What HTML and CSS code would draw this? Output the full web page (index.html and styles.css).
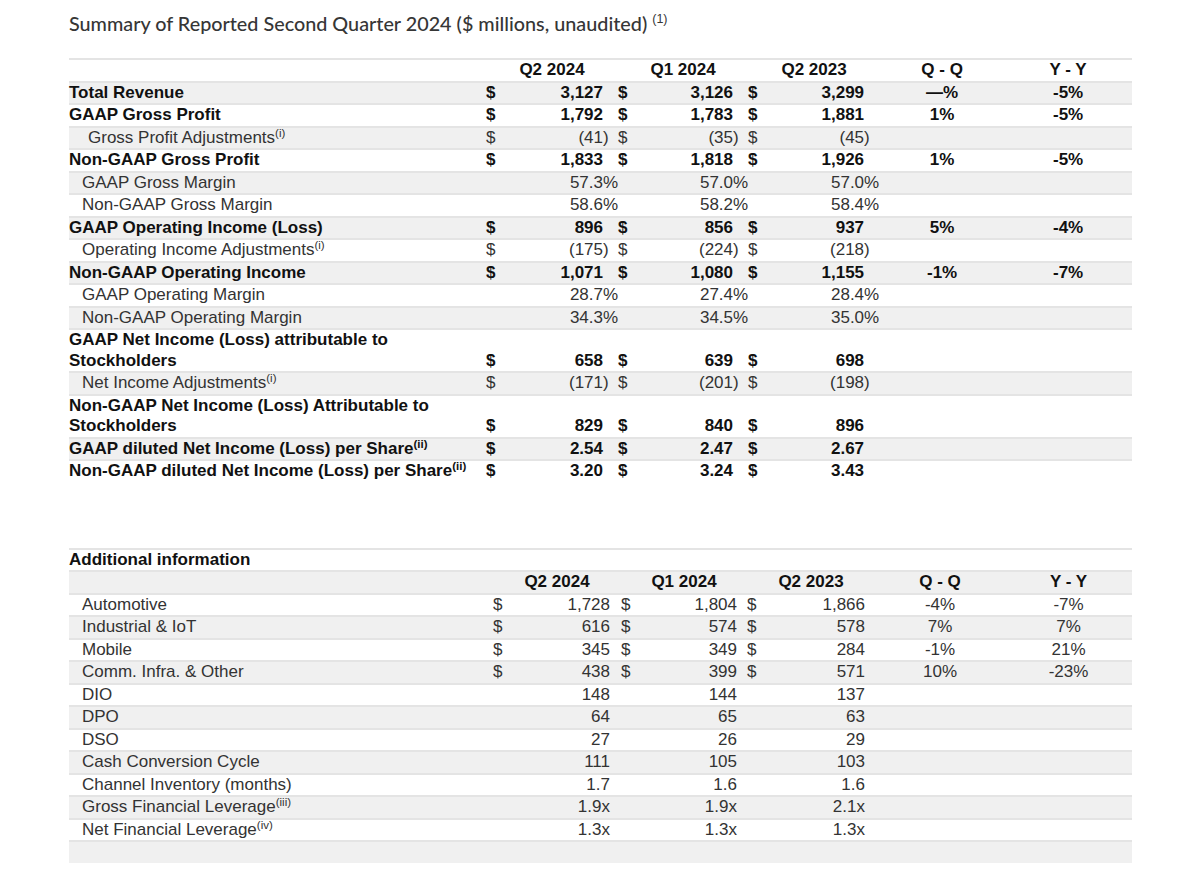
FILE: index.html
```html
<!DOCTYPE html>
<html lang="en">
<head>
<meta charset="utf-8">
<title>Summary of Reported Second Quarter 2024</title>
<link rel="stylesheet" href="styles.css">
</head>
<body>
<div class="page">
  <h1 class="title">Summary of Reported Second Quarter 2024 ($ millions, unaudited) <sup>(1)</sup></h1>

  <table class="fin top">
    <colgroup>
      <col class="w-label-t"><col class="w-d"><col class="w-n1t"><col class="w-s1t">
      <col class="w-d"><col class="w-n2t"><col class="w-s2t">
      <col class="w-d"><col class="w-n3t"><col class="w-s3t">
      <col class="w-qqt"><col class="w-yyt">
    </colgroup>
    <thead>
      <tr class="hdr">
        <th></th>
        <th colspan="3">Q2 2024</th>
        <th colspan="3">Q1 2024</th>
        <th colspan="3">Q2 2023</th>
        <th>Q - Q</th>
        <th>Y - Y</th>
      </tr>
    </thead>
    <tbody>
      <tr class="b alt">
        <td class="l">Total Revenue</td>
        <td class="d">$</td><td class="n">3,127</td><td class="s"></td>
        <td class="d">$</td><td class="n">3,126</td><td class="s"></td>
        <td class="d">$</td><td class="n">3,299</td><td class="s"></td>
        <td class="c">—%</td><td class="c">-5%</td>
      </tr>
      <tr class="b">
        <td class="l">GAAP Gross Profit</td>
        <td class="d">$</td><td class="n">1,792</td><td class="s"></td>
        <td class="d">$</td><td class="n">1,783</td><td class="s"></td>
        <td class="d">$</td><td class="n">1,881</td><td class="s"></td>
        <td class="c">1%</td><td class="c">-5%</td>
      </tr>
      <tr class="alt">
        <td class="l i2">Gross Profit Adjustments<sup>(i)</sup></td>
        <td class="d">$</td><td class="n">(41</td><td class="s">)</td>
        <td class="d">$</td><td class="n">(35</td><td class="s">)</td>
        <td class="d">$</td><td class="n">(45</td><td class="s">)</td>
        <td class="c"></td><td class="c"></td>
      </tr>
      <tr class="b">
        <td class="l">Non-GAAP Gross Profit</td>
        <td class="d">$</td><td class="n">1,833</td><td class="s"></td>
        <td class="d">$</td><td class="n">1,818</td><td class="s"></td>
        <td class="d">$</td><td class="n">1,926</td><td class="s"></td>
        <td class="c">1%</td><td class="c">-5%</td>
      </tr>
      <tr class="alt">
        <td class="l i1">GAAP Gross Margin</td>
        <td class="d"></td><td class="n">57.3</td><td class="s">%</td>
        <td class="d"></td><td class="n">57.0</td><td class="s">%</td>
        <td class="d"></td><td class="n">57.0</td><td class="s">%</td>
        <td class="c"></td><td class="c"></td>
      </tr>
      <tr>
        <td class="l i1">Non-GAAP Gross Margin</td>
        <td class="d"></td><td class="n">58.6</td><td class="s">%</td>
        <td class="d"></td><td class="n">58.2</td><td class="s">%</td>
        <td class="d"></td><td class="n">58.4</td><td class="s">%</td>
        <td class="c"></td><td class="c"></td>
      </tr>
      <tr class="b alt">
        <td class="l">GAAP Operating Income (Loss)</td>
        <td class="d">$</td><td class="n">896</td><td class="s"></td>
        <td class="d">$</td><td class="n">856</td><td class="s"></td>
        <td class="d">$</td><td class="n">937</td><td class="s"></td>
        <td class="c">5%</td><td class="c">-4%</td>
      </tr>
      <tr>
        <td class="l i1">Operating Income Adjustments<sup>(i)</sup></td>
        <td class="d">$</td><td class="n">(175</td><td class="s">)</td>
        <td class="d">$</td><td class="n">(224</td><td class="s">)</td>
        <td class="d">$</td><td class="n">(218</td><td class="s">)</td>
        <td class="c"></td><td class="c"></td>
      </tr>
      <tr class="b alt">
        <td class="l">Non-GAAP Operating Income</td>
        <td class="d">$</td><td class="n">1,071</td><td class="s"></td>
        <td class="d">$</td><td class="n">1,080</td><td class="s"></td>
        <td class="d">$</td><td class="n">1,155</td><td class="s"></td>
        <td class="c">-1%</td><td class="c">-7%</td>
      </tr>
      <tr>
        <td class="l i1">GAAP Operating Margin</td>
        <td class="d"></td><td class="n">28.7</td><td class="s">%</td>
        <td class="d"></td><td class="n">27.4</td><td class="s">%</td>
        <td class="d"></td><td class="n">28.4</td><td class="s">%</td>
        <td class="c"></td><td class="c"></td>
      </tr>
      <tr class="alt">
        <td class="l i1">Non-GAAP Operating Margin</td>
        <td class="d"></td><td class="n">34.3</td><td class="s">%</td>
        <td class="d"></td><td class="n">34.5</td><td class="s">%</td>
        <td class="d"></td><td class="n">35.0</td><td class="s">%</td>
        <td class="c"></td><td class="c"></td>
      </tr>
      <tr class="b">
        <td class="l">GAAP Net Income (Loss) attributable to<br>Stockholders</td>
        <td class="d">$</td><td class="n">658</td><td class="s"></td>
        <td class="d">$</td><td class="n">639</td><td class="s"></td>
        <td class="d">$</td><td class="n">698</td><td class="s"></td>
        <td class="c"></td><td class="c"></td>
      </tr>
      <tr class="alt">
        <td class="l i1">Net Income Adjustments<sup>(i)</sup></td>
        <td class="d">$</td><td class="n">(171</td><td class="s">)</td>
        <td class="d">$</td><td class="n">(201</td><td class="s">)</td>
        <td class="d">$</td><td class="n">(198</td><td class="s">)</td>
        <td class="c"></td><td class="c"></td>
      </tr>
      <tr class="b">
        <td class="l">Non-GAAP Net Income (Loss) Attributable to<br>Stockholders</td>
        <td class="d">$</td><td class="n">829</td><td class="s"></td>
        <td class="d">$</td><td class="n">840</td><td class="s"></td>
        <td class="d">$</td><td class="n">896</td><td class="s"></td>
        <td class="c"></td><td class="c"></td>
      </tr>
      <tr class="b alt">
        <td class="l">GAAP diluted Net Income (Loss) per Share<sup>(ii)</sup></td>
        <td class="d">$</td><td class="n">2.54</td><td class="s"></td>
        <td class="d">$</td><td class="n">2.47</td><td class="s"></td>
        <td class="d">$</td><td class="n">2.67</td><td class="s"></td>
        <td class="c"></td><td class="c"></td>
      </tr>
      <tr class="b">
        <td class="l">Non-GAAP diluted Net Income (Loss) per Share<sup>(ii)</sup></td>
        <td class="d">$</td><td class="n">3.20</td><td class="s"></td>
        <td class="d">$</td><td class="n">3.24</td><td class="s"></td>
        <td class="d">$</td><td class="n">3.43</td><td class="s"></td>
        <td class="c"></td><td class="c"></td>
      </tr>
    </tbody>
  </table>

  <table class="fin bottom">
    <colgroup>
      <col class="w-label-b"><col class="w-d"><col class="w-n1b"><col class="w-s1b">
      <col class="w-d"><col class="w-n2b"><col class="w-s2b">
      <col class="w-d"><col class="w-n3b"><col class="w-s3b">
      <col class="w-qqb"><col class="w-yyb">
    </colgroup>
    <thead>
      <tr class="b">
        <td class="l" colspan="12">Additional information</td>
      </tr>
      <tr class="hdr alt">
        <th></th>
        <th colspan="3">Q2 2024</th>
        <th colspan="3">Q1 2024</th>
        <th colspan="3">Q2 2023</th>
        <th>Q - Q</th>
        <th>Y - Y</th>
      </tr>
    </thead>
    <tbody>
      <tr>
        <td class="l i1">Automotive</td>
        <td class="d">$</td><td class="n">1,728</td><td class="s"></td>
        <td class="d">$</td><td class="n">1,804</td><td class="s"></td>
        <td class="d">$</td><td class="n">1,866</td><td class="s"></td>
        <td class="c">-4%</td><td class="c">-7%</td>
      </tr>
      <tr class="alt">
        <td class="l i1">Industrial &amp; IoT</td>
        <td class="d">$</td><td class="n">616</td><td class="s"></td>
        <td class="d">$</td><td class="n">574</td><td class="s"></td>
        <td class="d">$</td><td class="n">578</td><td class="s"></td>
        <td class="c">7%</td><td class="c">7%</td>
      </tr>
      <tr>
        <td class="l i1">Mobile</td>
        <td class="d">$</td><td class="n">345</td><td class="s"></td>
        <td class="d">$</td><td class="n">349</td><td class="s"></td>
        <td class="d">$</td><td class="n">284</td><td class="s"></td>
        <td class="c">-1%</td><td class="c">21%</td>
      </tr>
      <tr class="alt">
        <td class="l i1">Comm. Infra. &amp; Other</td>
        <td class="d">$</td><td class="n">438</td><td class="s"></td>
        <td class="d">$</td><td class="n">399</td><td class="s"></td>
        <td class="d">$</td><td class="n">571</td><td class="s"></td>
        <td class="c">10%</td><td class="c">-23%</td>
      </tr>
      <tr>
        <td class="l i1">DIO</td>
        <td class="d"></td><td class="n">148</td><td class="s"></td>
        <td class="d"></td><td class="n">144</td><td class="s"></td>
        <td class="d"></td><td class="n">137</td><td class="s"></td>
        <td class="c"></td><td class="c"></td>
      </tr>
      <tr class="alt">
        <td class="l i1">DPO</td>
        <td class="d"></td><td class="n">64</td><td class="s"></td>
        <td class="d"></td><td class="n">65</td><td class="s"></td>
        <td class="d"></td><td class="n">63</td><td class="s"></td>
        <td class="c"></td><td class="c"></td>
      </tr>
      <tr>
        <td class="l i1">DSO</td>
        <td class="d"></td><td class="n">27</td><td class="s"></td>
        <td class="d"></td><td class="n">26</td><td class="s"></td>
        <td class="d"></td><td class="n">29</td><td class="s"></td>
        <td class="c"></td><td class="c"></td>
      </tr>
      <tr class="alt">
        <td class="l i1">Cash Conversion Cycle</td>
        <td class="d"></td><td class="n">111</td><td class="s"></td>
        <td class="d"></td><td class="n">105</td><td class="s"></td>
        <td class="d"></td><td class="n">103</td><td class="s"></td>
        <td class="c"></td><td class="c"></td>
      </tr>
      <tr>
        <td class="l i1">Channel Inventory (months)</td>
        <td class="d"></td><td class="n">1.7</td><td class="s"></td>
        <td class="d"></td><td class="n">1.6</td><td class="s"></td>
        <td class="d"></td><td class="n">1.6</td><td class="s"></td>
        <td class="c"></td><td class="c"></td>
      </tr>
      <tr class="alt">
        <td class="l i1">Gross Financial Leverage<sup>(iii)</sup></td>
        <td class="d"></td><td class="n">1.9x</td><td class="s"></td>
        <td class="d"></td><td class="n">1.9x</td><td class="s"></td>
        <td class="d"></td><td class="n">2.1x</td><td class="s"></td>
        <td class="c"></td><td class="c"></td>
      </tr>
      <tr>
        <td class="l i1">Net Financial Leverage<sup>(iv)</sup></td>
        <td class="d"></td><td class="n">1.3x</td><td class="s"></td>
        <td class="d"></td><td class="n">1.3x</td><td class="s"></td>
        <td class="d"></td><td class="n">1.3x</td><td class="s"></td>
        <td class="c"></td><td class="c"></td>
      </tr>
      <tr class="alt">
        <td class="l">&nbsp;</td>
        <td class="d"></td><td class="n"></td><td class="s"></td>
        <td class="d"></td><td class="n"></td><td class="s"></td>
        <td class="d"></td><td class="n"></td><td class="s"></td>
        <td class="c"></td><td class="c"></td>
      </tr>
    </tbody>
  </table>
</div>
</body>
</html>
```

FILE: styles.css
```css
* {
  box-sizing: border-box;
}

html, body {
  margin: 0;
  padding: 0;
  background: #ffffff;
}

.page {
  padding: 11px 0 0 69px;
  width: 1132px;
}

.title {
  margin: 0;
  font-family: Lato, "Liberation Sans", sans-serif;
  font-size: 19.8px;
  font-weight: 500;
  line-height: 24px;
  color: #363636;
  white-space: nowrap;
}

.title sup {
  font-family: "Liberation Sans", Arial, sans-serif;
  font-size: 12.5px;
  font-weight: 400;
  line-height: 0;
  vertical-align: 8px;
  color: #363636;
}

.fin {
  width: 1063px;
  table-layout: fixed;
  border-collapse: collapse;
  font-family: "Liberation Sans", Arial, sans-serif;
  font-size: 17px;
  color: #333333;
}

.fin.top {
  margin-top: 23px;
}

.fin.bottom {
  margin-top: 66px;
}

.fin td,
.fin th {
  padding: 0;
  line-height: 20.5px;
  border-top: 2px solid #e4e4e4;
  vertical-align: bottom;
  white-space: nowrap;
  overflow: visible;
}

.fin th {
  font-weight: 700;
  color: #111111;
  text-align: center;
}

.fin tr.alt td,
.fin tr.alt th {
  background: #f0f0f0;
}

.fin tr.b td {
  font-weight: 700;
  color: #111111;
}

.fin sup {
  font-size: 11.5px;
  line-height: 0;
  vertical-align: 6px;
}

.l {
  text-align: left;
}

.l.i1 {
  padding-left: 13px;
}

.l.i2 {
  padding-left: 19px;
}

.d {
  text-align: left;
  padding-left: 2px;
}

.n {
  text-align: right;
}

.s {
  text-align: left;
}

.c {
  text-align: center;
}

/* top table column widths */
.w-label-t { width: 417px; }
.w-d { width: 18px; }
.w-n1t { width: 99px; }
.w-s1t { width: 15px; }
.w-n2t { width: 97px; }
.w-s2t { width: 15px; }
.w-n3t { width: 98px; }
.w-s3t { width: 16px; }
.w-qqt { width: 124px; }
.w-yyt { width: 128px; }

/* bottom table column widths */
.w-label-b { width: 424px; }
.w-n1b { width: 99px; }
.w-s1b { width: 11px; }
.w-n2b { width: 98px; }
.w-s2b { width: 10px; }
.w-n3b { width: 100px; }
.w-s3b { width: 10px; }
.w-qqb { width: 130px; }
.w-yyb { width: 127px; }
```
